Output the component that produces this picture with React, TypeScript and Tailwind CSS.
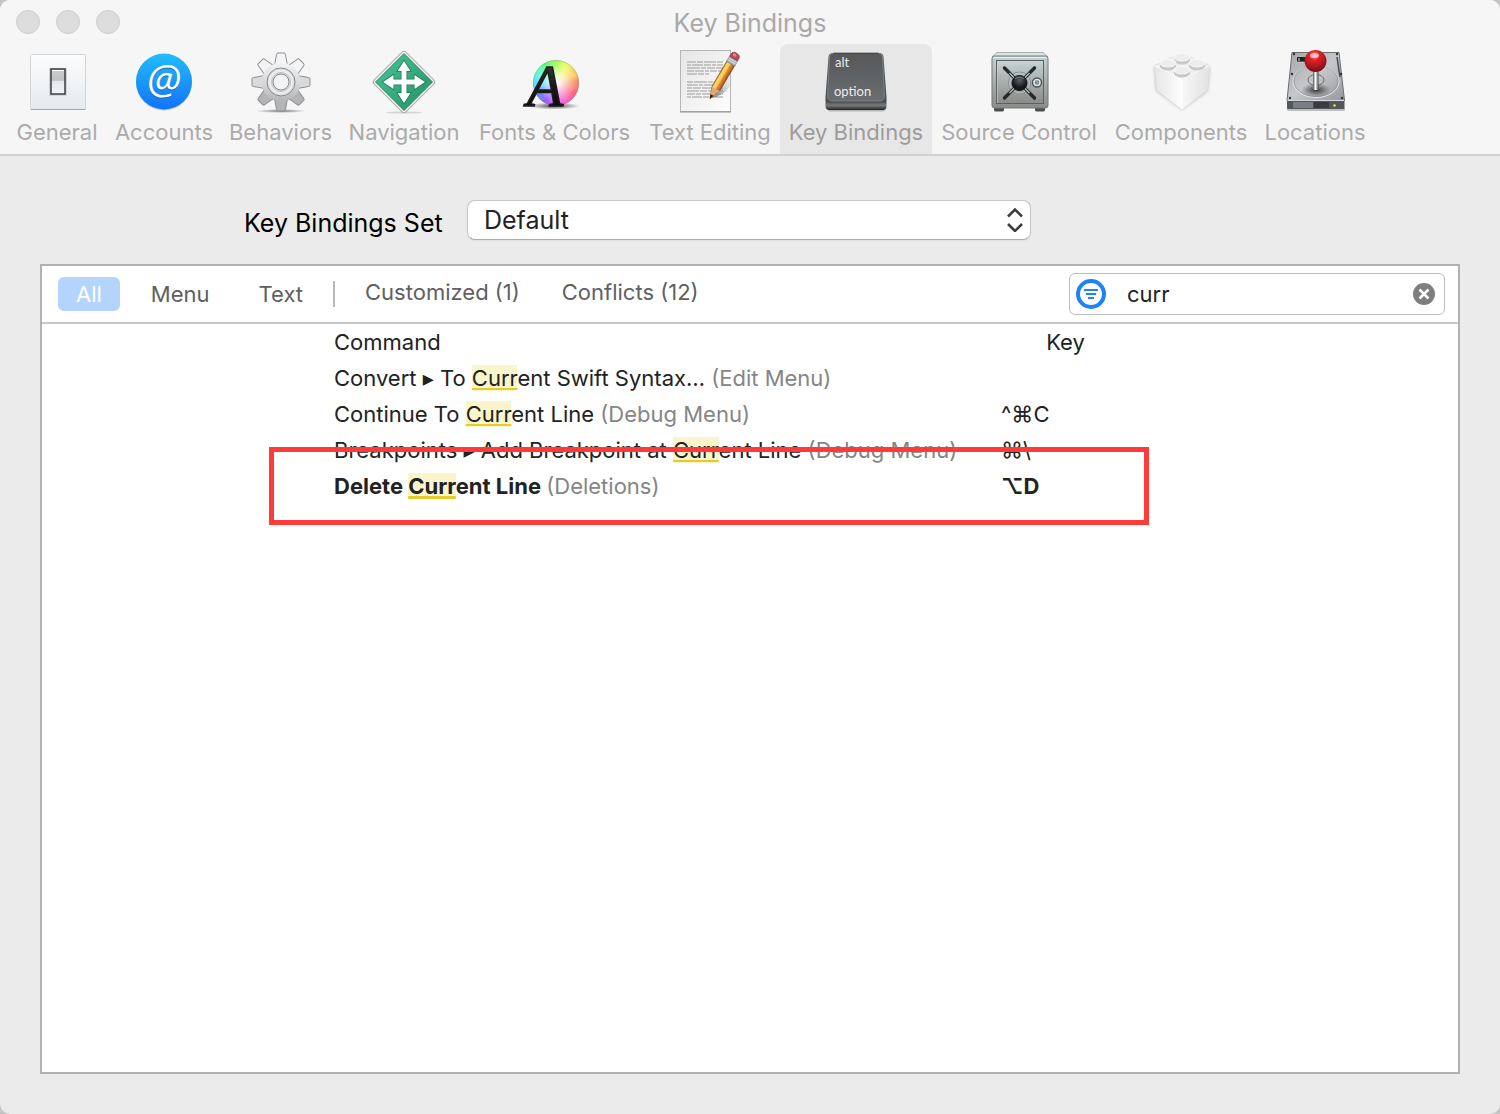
import { useState } from "react"
import type { ReactNode } from "react"

interface Binding {
  before: string
  after: string
  group: string
  keys: string
  bold?: boolean
}

const bindings: Binding[] = [
  { before: "Convert ▸ To ", after: "ent Swift Syntax…", group: "(Edit Menu)", keys: "" },
  { before: "Continue To ", after: "ent Line", group: "(Debug Menu)", keys: "^⌘C" },
  { before: "Breakpoints ▸ Add Breakpoint at ", after: "ent Line", group: "(Debug Menu)", keys: "⌘\\" },
  { before: "Delete ", after: "ent Line", group: "(Deletions)", keys: "⌥D", bold: true },
]

function Icon({ children }: { children: ReactNode }) {
  return (
    <svg className="h-16 w-16 overflow-visible" viewBox="0 0 64 64" aria-hidden="true">
      {children}
    </svg>
  )
}

function GeneralIcon() {
  return (
    <Icon>
      <defs>
        <linearGradient id="plate" x1="0" y1="0" x2="0" y2="1">
          <stop offset="0" stopColor="#fcfcfd" />
          <stop offset="1" stopColor="#e6eaee" />
        </linearGradient>
        <linearGradient id="rocker" x1="0" y1="0" x2="0" y2="1">
          <stop offset="0" stopColor="#d0d1d3" />
          <stop offset="0.45" stopColor="#bfc0c2" />
          <stop offset="0.5" stopColor="#e6e9eb" />
          <stop offset="1" stopColor="#f2f4f5" />
        </linearGradient>
      </defs>
      <rect x="5.5" y="4.5" width="55" height="55" rx="1" fill="url(#plate)" stroke="#d3d6d9" />
      <path d="M6 59.5h54.5" stroke="#a4a8ac" />
      <rect x="24" y="18" width="18" height="28" rx="1" fill="#d3d5d8" />
      <rect x="26" y="19" width="14" height="25" fill="url(#rocker)" stroke="#3d3f42" strokeWidth="1.5" />
      <path d="M27 20.5h12" stroke="#fff" />
    </Icon>
  )
}

function AccountsIcon() {
  return (
    <Icon>
      <defs>
        <linearGradient id="at" x1="0" y1="0" x2="0" y2="1">
          <stop offset="0" stopColor="#22bdfa" />
          <stop offset="1" stopColor="#1372fb" />
        </linearGradient>
      </defs>
      <circle cx="32" cy="32.5" r="28" fill="#bcc8d6" />
      <circle cx="32" cy="31.5" r="28" fill="url(#at)" />
      <text x="32" y="45" textAnchor="middle" fontSize="40" fontStyle="italic" fontFamily="Open Sans, sans-serif" fill="#1764b8">
        @
      </text>
      <text x="32" y="44" textAnchor="middle" fontSize="40" fontStyle="italic" fontFamily="Open Sans, sans-serif" fill="#fff">
        @
      </text>
    </Icon>
  )
}

function BehaviorsIcon() {
  const teeth = [45, 135, 225, 315, 0, 90, 270, 180]
  return (
    <Icon>
      <defs>
        <linearGradient id="gear" gradientUnits="userSpaceOnUse" x1="0" y1="4" x2="0" y2="60">
          <stop offset="0" stopColor="#ffffff" />
          <stop offset="0.5" stopColor="#d9d9da" />
          <stop offset="1" stopColor="#a5a5a7" />
        </linearGradient>
        <radialGradient id="gearShadow">
          <stop offset="0" stopColor="#777" />
          <stop offset="1" stopColor="#777" stopOpacity="0" />
        </radialGradient>
      </defs>
      <ellipse cx="32" cy="61" rx="25" ry="2" fill="url(#gearShadow)" />
      {teeth.map((angle) => (
        <path
          key={angle}
          d="M24.5 16l1.5-3L27.5 4.500Q27.5 3 29 3h6Q36.500 3 36.500 4.500L38 13l1.500 3z"
          transform={`rotate(${angle} 32 32)`}
          fill={angle > 90 && angle < 270 ? "#b4b4b6" : angle % 180 === 90 ? "#dadadb" : "#f4f4f5"}
          stroke="#8b9098"
        />
      ))}
      <circle cx="32" cy="32" r="19.5" fill="url(#gear)" />
      <circle cx="32" cy="32" r="14" fill="#dcdcdd" stroke="#858b94" />
      <circle cx="32" cy="32" r="11" fill="none" stroke="#ececed" strokeWidth="3" />
      <circle cx="32" cy="32" r="8" fill="#f3f3f3" stroke="#858b94" />
      <circle cx="32" cy="32" r="9.5" fill="none" stroke="#bfc1c4" />
    </Icon>
  )
}

function NavigationIcon() {
  return (
    <Icon>
      <defs>
        <linearGradient id="sign" x1="0" y1="0" x2="1" y2="1">
          <stop offset="0" stopColor="#49c897" />
          <stop offset="1" stopColor="#258e64" />
        </linearGradient>
      </defs>
      <ellipse cx="32" cy="62.5" rx="18" ry="1" fill="#d5d5d5" />
      <rect x="9.500" y="9.500" width="45" height="45" rx="3" transform="rotate(45 32 32)" fill="#fff" stroke="#a8a8a8" />
      <path d="M32 3.5 60.5 32 32 60.5 3.5 32z" fill="url(#sign)" stroke="#23865f" />
      <path
        d="M32 11l6.5 10h-4v8.500h8v-4.500L53 32l-10.500 7v-4.500h-8V43h4L32 53l-6.500-10h4v-8.500h-8V39L11 32l10.500-7v4.500h8V21h-4z"
        fill="#fff"
        stroke="#1d7854"
        strokeWidth="1.5"
        paintOrder="stroke"
      />
    </Icon>
  )
}

function FontsIcon() {
  // Twelve hue wedges, clockwise from the top
  const hues = [95, 65, 45, 15, 350, 320, 295, 260, 225, 190, 165, 130]
  return (
    <Icon>
      <defs>
        <clipPath id="wheel">
          <circle cx="33" cy="33" r="23" />
        </clipPath>
        <filter id="soften">
          <feGaussianBlur stdDeviation="2.5" />
        </filter>
        <radialGradient id="wheelCenter">
          <stop offset="0" stopColor="#fff" />
          <stop offset="1" stopColor="#fff" stopOpacity="0" />
        </radialGradient>
        <radialGradient id="wheelShadow">
          <stop offset="0" stopColor="#000" stopOpacity="0.7" />
          <stop offset="1" stopColor="#000" stopOpacity="0" />
        </radialGradient>
        <linearGradient id="ink" x1="0" y1="0" x2="0" y2="1">
          <stop offset="0" stopColor="#4a4a4a" />
          <stop offset="0.5" stopColor="#1a1a1a" />
          <stop offset="1" stopColor="#000" />
        </linearGradient>
      </defs>
      <ellipse cx="31" cy="56" rx="26" ry="3.5" fill="url(#wheelShadow)" />
      <g clipPath="url(#wheel)">
        <g filter="url(#soften)">
          {hues.map((hue, i) => (
            <path key={hue} d="M33 33 25 3H41z" transform={`rotate(${i * 30} 33 33)`} fill={`hsl(${hue} 95% 68%)`} />
          ))}
        </g>
        <circle cx="34" cy="33" r="20" fill="url(#wheelCenter)" />
      </g>
      <circle cx="33" cy="33" r="22.5" fill="none" stroke="#777" strokeOpacity="0.35" />
      <text
        x="22"
        y="56"
        textAnchor="middle"
        fontSize="59"
        fontStyle="italic"
        fontFamily="Liberation Serif, serif"
        fill="url(#ink)"
        stroke="#1c1c1c"
        strokeWidth="1.5"
      >
        A
      </text>
    </Icon>
  )
}

function TextEditingIcon() {
  // Each line of print has its own word lengths
  const lines = [
    { y: 12, dash: "9 1 6 1 12 1" },
    { y: 15, dash: "4 1 11 1 7 1" },
    { y: 18, dash: "13 1 5 1 8 1" },
    { y: 21, dash: "7 1 9 1 4 1" },
    { y: 24, dash: "10 1 6 1" },
    { y: 32, dash: "6 1 13 1 5 1" },
    { y: 35, dash: "11 1 4 1 9 1" },
    { y: 38, dash: "5 1 8 1 12 1" },
    { y: 41, dash: "12 1 7 1 5 1" },
    { y: 44, dash: "8 1 5 1 10 1" },
    { y: 47, dash: "4 1 10 1 6 1" },
  ]
  return (
    <Icon>
      <defs>
        <linearGradient id="sheet" x1="0" y1="0" x2="1" y2="1">
          <stop offset="0" stopColor="#e6e6e6" />
          <stop offset="1" stopColor="#fdfdfd" />
        </linearGradient>
        <linearGradient id="pencil" x1="0" y1="0" x2="1" y2="0">
          <stop offset="0" stopColor="#b98a25" />
          <stop offset="0.15" stopColor="#f4d766" />
          <stop offset="0.45" stopColor="#f7c65a" />
          <stop offset="0.55" stopColor="#ea9440" />
          <stop offset="1" stopColor="#a44f16" />
        </linearGradient>
        <linearGradient id="castShadow" x1="0" y1="1" x2="1" y2="0">
          <stop offset="0" stopColor="#555" stopOpacity="0.7" />
          <stop offset="1" stopColor="#999" stopOpacity="0.05" />
        </linearGradient>
      </defs>
      <rect x="2.5" y="0.5" width="50" height="61" fill="url(#sheet)" stroke="#b5b5b5" />
      <path d="M2 62h51" stroke="#8e8e8e" />
      {lines.map(({ y, dash }) => (
        <path key={y} d={y === 24 ? `M9 ${y}h22` : `M9 ${y}h36`} stroke="#999" strokeDasharray={dash} />
      ))}
      <path d="M33 48 52 26v10Q46 46 33 48z" fill="url(#castShadow)" />
      <g transform="translate(32 48.5) rotate(30.6)">
        <path d="M0 0-4.500-12V-42h9v30z" fill="url(#pencil)" stroke="#80501f" strokeWidth="0.7" />
        <path d="M0 0-4.500-12 0-10.500 4.500-12z" fill="#dfa878" />
        <path d="M0 0.500-1.600-4h3.200z" fill="#1d1d1d" />
        <path d="M-4.700-46.500h9.400v6h-9.400z" fill="#a9b4bd" stroke="#73808b" strokeWidth="0.7" />
        <path d="M-4.700-44.500h9.400M-4.700-42.500h9.400" stroke="#e3eaef" strokeWidth="0.7" />
        <path d="M-4.500-46.500v-2.500q0-3.500 4.500-3.500t4.500 3.500v2.500z" fill="#bf4a50" stroke="#8b3138" strokeWidth="0.7" />
        <ellipse cx="-1" cy="-50" rx="2" ry="1.5" fill="#e08488" />
      </g>
    </Icon>
  )
}

function KeyIcon() {
  return (
    <Icon>
      <defs>
        <linearGradient id="cap" x1="0" y1="0" x2="0" y2="1">
          <stop offset="0" stopColor="#555759" />
          <stop offset="1" stopColor="#6b6e70" />
        </linearGradient>
        <linearGradient id="capSide" x1="0" y1="0" x2="0" y2="1">
          <stop offset="0" stopColor="#5b5d5f" />
          <stop offset="0.85" stopColor="#4a4c4e" />
          <stop offset="0.92" stopColor="#77797b" />
          <stop offset="1" stopColor="#1f2021" />
        </linearGradient>
      </defs>
      <rect x="3" y="54" width="59" height="7.5" rx="4" fill="#b6b6b6" />
      <path d="M9 3h46q4 0 4.500 4l3 40v9q0 4-4 4H5.500q-4 0-4-4v-9l3-40Q5 3 9 3z" fill="url(#capSide)" />
      <path
        d="M9.500 3.500h45q3.500 0 4 3.500l2 39q0 5-5 5h-47q-5 0-5-5l2-39q.5-3.500 4-3.500z"
        fill="url(#cap)"
        stroke="#84878a"
        strokeWidth="0.8"
      />
      <path d="M9.500 3.200h45" stroke="#303234" />
      <text x="11" y="17" fontSize="13" fontFamily="Lato, sans-serif" fill="#ececec">
        alt
      </text>
      <text x="10" y="46" fontSize="13" fontFamily="Lato, sans-serif" fill="#ececec">
        option
      </text>
    </Icon>
  )
}

function SafeIcon() {
  return (
    <Icon>
      <defs>
        <linearGradient id="safe" x1="0" y1="0" x2="0" y2="1">
          <stop offset="0" stopColor="#c6d2d2" />
          <stop offset="0.5" stopColor="#a8aeac" />
          <stop offset="1" stopColor="#8b8b89" />
        </linearGradient>
        <radialGradient id="hub" cx="0.5" cy="0.3">
          <stop offset="0" stopColor="#5d646a" />
          <stop offset="1" stopColor="#16191c" />
        </radialGradient>
      </defs>
      <path d="M7 57h10v3q0 1.500-2 1.500H9Q7 61.500 7 60zM48 57h10v3q0 1.500-2 1.500h-6q-2 0-2-1.500z" fill="#4b4d4f" />
      <path d="M10 2.500h46l5 4.500H5z" fill="#d8e6e6" stroke="#8a9696" strokeWidth="0.7" />
      <rect x="5" y="6" width="56" height="52" rx="2.5" fill="url(#safe)" stroke="#727a7a" />
      <path d="M6.500 7.500h53" stroke="#e7f1f1" />
      <rect x="9.5" y="10.5" width="47" height="43" fill="url(#safe)" stroke="#5b6161" />
      <path d="M10.500 53V11.500H56" fill="none" stroke="#ccd5d5" strokeWidth="0.600" />
      <circle cx="32.5" cy="33" r="11" fill="none" stroke="#858c8c" />
      <circle cx="32.5" cy="33" r="10" fill="none" stroke="#bcc5c5" />
      <path d="M17.500 18l30 30M47.500 18l-30 30" stroke="#25292c" strokeWidth="3.200" strokeLinecap="round" />
      <path d="M20 20.500l25 25M45 20.500l-25 25" stroke="#b4bbbd" strokeWidth="1.300" />
      <path d="M17.500 18l4 4M47.500 18l-4 4M17.500 48l4-4M47.500 48l-4-4" stroke="#25292c" strokeWidth="3" strokeLinecap="round" />
      <circle cx="32.5" cy="33" r="7.5" fill="url(#hub)" stroke="#15181b" />
      <path d="M28 28.500q4.500-3 9 0" fill="none" stroke="#777e84" />
      <circle cx="50" cy="32.5" r="4.500" fill="#a9b2b3" stroke="#50575a" strokeWidth="1.5" />
      <circle cx="50" cy="32.5" r="3" fill="#8b9496" stroke="#e8f0f0" strokeWidth="1.2" />
    </Icon>
  )
}

function ComponentsIcon() {
  const studs = [
    [33, 7],
    [19, 13],
    [48, 13],
    [33, 20],
  ]
  return (
    <Icon>
      <defs>
        <linearGradient id="brickLeft" x1="0" y1="0" x2="1" y2="0">
          <stop offset="0" stopColor="#e6e6e6" />
          <stop offset="1" stopColor="#fdfdfd" />
        </linearGradient>
        <linearGradient id="brickRight" x1="0" y1="0" x2="1" y2="0">
          <stop offset="0" stopColor="#f7f7f7" />
          <stop offset="1" stopColor="#e2e2e2" />
        </linearGradient>
        <filter id="brickShadow">
          <feGaussianBlur stdDeviation="1.5" />
        </filter>
      </defs>
      <path d="M5 17 33 5 61 17 59 41 33 60 7 41z" fill="#c4c4c4" filter="url(#brickShadow)" />
      <path d="M5.500 15.500 33 3.500 60.500 15.500 33 29z" fill="#ededed" stroke="#d7d7d7" strokeWidth="0.7" />
      <path d="M5.500 15.500 33 29v30.500L8 40.500z" fill="url(#brickLeft)" />
      <path d="M60.500 15.500 33 29v30.500L58.500 40z" fill="url(#brickRight)" />
      <path d="M5.500 15.500 33 29l27.500-13.500" fill="none" stroke="#fff" />
      <path d="M33 29.500V59" stroke="#fff" />
      {studs.map(([x, y]) => (
        <g key={`${x}-${y}`}>
          <path d={`M${x - 8} ${y}v3.500a8 4 0 0 0 16 0V${y}z`} fill="#c8c8c8" />
          <ellipse cx={x} cy={y} rx="8" ry="4" fill="#ededed" stroke="#fff" strokeWidth="0.8" />
        </g>
      ))}
    </Icon>
  )
}

function LocationsIcon() {
  return (
    <Icon>
      <defs>
        <linearGradient id="disk" x1="0" y1="0" x2="1" y2="1">
          <stop offset="0" stopColor="#a4a5a9" />
          <stop offset="0.5" stopColor="#c6c7ca" />
          <stop offset="1" stopColor="#96979b" />
        </linearGradient>
        <radialGradient id="ball" cx="0.45" cy="0.25" r="0.75">
          <stop offset="0" stopColor="#ff9c9c" />
          <stop offset="0.3" stopColor="#e5212a" />
          <stop offset="1" stopColor="#780f14" />
        </radialGradient>
        <linearGradient id="stick" x1="0" y1="0" x2="1" y2="0">
          <stop offset="0" stopColor="#555" />
          <stop offset="0.45" stopColor="#fff" />
          <stop offset="1" stopColor="#4a4a4a" />
        </linearGradient>
        <radialGradient id="base">
          <stop offset="0" stopColor="#333" />
          <stop offset="1" stopColor="#555" stopOpacity="0" />
        </radialGradient>
      </defs>
      <rect x="4" y="57" width="58" height="4" rx="1.5" fill="#bdbdbd" />
      <path d="M9 2.500h47l5.500 48H4z" fill="url(#disk)" stroke="#6b6c70" />
      <path d="M4 50h57.500v8q0 1-1 1H5q-1 0-1-1z" fill="#54565d" />
      <path d="M4.500 50.500h56.500" stroke="#d8d9dc" />
      <path d="M10 52h21v6H10z" fill="#7c7e86" />
      {[31, 33, 35, 37, 39, 41, 43, 45].map((x) => (
        <path key={x} d={`M${x} 52v6`} stroke="#1f2023" />
      ))}
      <circle cx="51.5" cy="55.5" r="1.3" fill="#e8e337" />
      <path d="M13.500 6.500h9v5.500h-9z" fill="#202124" stroke="#e8e8e8" strokeWidth="0.6" />
      <path d="M16 8v3" stroke="#ddd" />
      <path d="M54 7l3 20" stroke="#47484c" strokeWidth="1.5" />
      <ellipse cx="33" cy="31.5" rx="23" ry="16" fill="none" stroke="#e6e7e9" />
      <ellipse cx="33" cy="31" rx="22" ry="15.5" fill="none" stroke="#85868a" strokeWidth="0.6" />
      <ellipse cx="33" cy="40" rx="15" ry="7" fill="url(#base)" />
      <ellipse cx="33" cy="30" rx="8" ry="5.5" fill="none" stroke="#6b6c70" />
      {[
        [11, 4],
        [54, 4],
        [9, 24],
        [58, 24],
        [7, 48],
        [59, 48],
      ].map(([x, y]) => (
        <circle key={`${x}-${y}`} cx={x} cy={y} r="1.2" fill="#333437" />
      ))}
      <rect x="30" y="20" width="5.5" height="20" rx="1.5" fill="url(#stick)" />
      <circle cx="32.5" cy="11" r="11" fill="url(#ball)" />
      <ellipse cx="31.5" cy="5.5" rx="4.5" ry="2.5" fill="#fff" fillOpacity="0.55" />
    </Icon>
  )
}

const tabs = [
  { label: "General", icon: <GeneralIcon />, width: "w-[98px]" },
  { label: "Accounts", icon: <AccountsIcon />, width: "w-[116px]" },
  { label: "Behaviors", icon: <BehaviorsIcon />, width: "w-[117px]" },
  { label: "Navigation", icon: <NavigationIcon />, width: "w-[130px]" },
  { label: "Fonts & Colors", icon: <FontsIcon />, width: "w-[171px]" },
  { label: "Text Editing", icon: <TextEditingIcon />, width: "w-[140px]" },
  { label: "Key Bindings", icon: <KeyIcon />, width: "w-[152px]" },
  { label: "Source Control", icon: <SafeIcon />, width: "w-[174px]" },
  { label: "Components", icon: <ComponentsIcon />, width: "w-[150px]" },
  { label: "Locations", icon: <LocationsIcon />, width: "w-[118px]" },
]

export default function App() {
  const [activeTab, setActiveTab] = useState("Key Bindings")
  const [scope, setScope] = useState("All")
  const [query, setQuery] = useState("curr")

  return (
    <div className="min-h-screen bg-[#c4c6c4] font-['Inter','DejaVu_Sans',sans-serif] text-[22px] leading-6 text-[#222]">
      <div className="flex min-h-screen flex-col overflow-hidden rounded-[10px] bg-[#ebebeb]">
        {/* Title bar and toolbar */}
        <header className="border-b-2 border-[#d0d0d0] bg-[#f6f6f6]">
          <div className="grid h-11 grid-cols-[1fr_auto_1fr] items-center px-4">
            <div className="flex gap-4">
              <button aria-label="Close" className="h-6 w-6 rounded-full border border-[#cccccc] bg-[#dddddd]" />
              <button aria-label="Minimize" className="h-6 w-6 rounded-full border border-[#cccccc] bg-[#dddddd]" />
              <button aria-label="Zoom" className="h-6 w-6 rounded-full border border-[#cccccc] bg-[#dddddd]" />
            </div>
            <h1 className="pt-0.5 text-[25px] text-[#a9a9a9]">Key Bindings</h1>
          </div>
          <nav className="flex px-2">
            {tabs.map((tab) => (
              <button
                key={tab.label}
                onClick={() => setActiveTab(tab.label)}
                className={`flex h-[110px] shrink-0 flex-col items-center gap-1.5 whitespace-nowrap rounded-t-lg pt-1.5 ${tab.width} ${
                  activeTab === tab.label ? "bg-[#e7e7e7] text-[#9c9c9c]" : "text-[#ababab]"
                }`}
              >
                {tab.icon}
                <span>{tab.label}</span>
              </button>
            ))}
          </nav>
        </header>

        <main className="flex flex-1 flex-col px-10 pt-11 pb-10">
          {/* Key bindings set */}
          <div className="flex items-center gap-5 pl-[204px] text-[25px] leading-8">
            <label htmlFor="binding-set" className="w-[203px] whitespace-nowrap pt-1.5 text-black">
              Key Bindings Set
            </label>
            <div className="relative w-[564px]">
              <select
                id="binding-set"
                className="h-10 w-full appearance-none rounded-lg border border-[#c6c6c6] border-b-[#adadad] bg-white px-4 shadow-xs"
              >
                <option>Default</option>
              </select>
              <svg
                className="pointer-events-none absolute top-2 right-2 h-6 w-4"
                viewBox="0 0 16 24"
                fill="none"
                stroke="#3c3c3c"
                strokeWidth="2.5"
                aria-hidden="true"
              >
                <path d="M1 8.500 8 1.500l7 7M1 16l7 7 7-7" />
              </svg>
            </div>
          </div>

          <section className="mt-6 flex flex-1 flex-col border-2 border-[#b2b2b2] bg-white">
            {/* Filter bar */}
            <div className="flex h-[58px] items-center border-b-2 border-[#c8c8c8] pr-[13px] pl-4 text-[#606060]">
              <div className="flex gap-[13px]">
                {["All", "Menu", "Text"].map((name) => (
                  <button
                    key={name}
                    onClick={() => setScope(name)}
                    className={`h-[34px] rounded-md px-[18px] ${scope === name ? "bg-[#b2d4fd] text-white" : ""}`}
                  >
                    {name}
                  </button>
                ))}
              </div>
              <div className="mr-[30px] ml-3 h-[26px] w-0.5 bg-[#b8b8b8]" />
              <div className="flex gap-[42px] pb-1">
                <button>Customized (1)</button>
                <button>Conflicts (12)</button>
              </div>
              <div className="ml-auto flex h-[42px] w-[376px] items-center rounded-md border border-[#bdbdbd] pr-[9px] pl-[5px]">
                <svg className="h-8 w-8 shrink-0" viewBox="0 0 32 32" fill="none" stroke="#1e82fb" aria-hidden="true">
                  <circle cx="16" cy="16" r="13" strokeWidth="4" />
                  <path d="M9 12h14M11 16h10M13 20h6" strokeWidth="2" />
                </svg>
                <input
                  aria-label="Filter"
                  value={query}
                  onChange={(e) => setQuery(e.target.value)}
                  className="ml-5 min-w-0 flex-1 bg-transparent text-[#222] outline-none"
                />
                <button aria-label="Clear" onClick={() => setQuery("")}>
                  <svg className="h-[22px] w-[22px]" viewBox="0 0 22 22" aria-hidden="true">
                    <circle cx="11" cy="11" r="11" fill="#7f7f7f" />
                    <path d="M6.500 6.500l9 9M15.500 6.500l-9 9" stroke="#fff" strokeWidth="2.5" />
                  </svg>
                </button>
              </div>
            </div>

            {/* Bindings list */}
            <div className="relative mx-auto w-[832px]">
              <table className="w-full table-fixed text-left">
                <thead>
                  <tr className="h-9">
                    <th className="p-0 font-normal">Command</th>
                    <th className="w-[165px] p-0 pr-9 text-center font-normal">Key</th>
                  </tr>
                </thead>
                <tbody>
                  {bindings.map((item) => (
                    <tr key={item.before} className={`h-9 whitespace-pre ${item.bold ? "font-bold" : ""}`}>
                      <td className="p-0">
                        {item.before}
                        <mark
                          className={`bg-[#fbf5cb] text-inherit underline decoration-[#e9c92b] underline-offset-2 [text-decoration-skip-ink:none] ${
                            item.bold ? "decoration-3" : "decoration-2"
                          }`}
                        >
                          Curr
                        </mark>
                        {item.after} <span className="font-normal text-[#858585]">{item.group}</span>
                      </td>
                      <td className="p-0">{item.keys}</td>
                    </tr>
                  ))}
                </tbody>
              </table>
              {/* Callout around the custom binding */}
              <div className="pointer-events-none absolute top-[123px] right-[17px] -left-[65px] h-[78px] border-5 border-[#ff3b3a]" />
            </div>
          </section>
        </main>
      </div>
    </div>
  )
}
